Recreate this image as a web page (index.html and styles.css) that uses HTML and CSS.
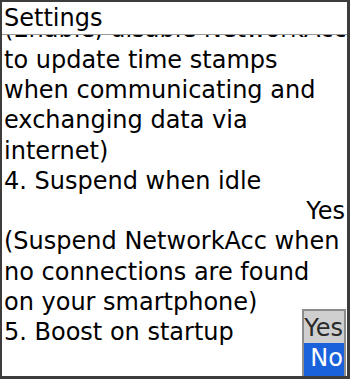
FILE: index.html
```html
<!DOCTYPE html>
<html>
<head>
<meta charset="utf-8">
<link rel="stylesheet" href="styles.css">
</head>
<body>
<div class="frame">
  <div class="titlebar">Settings</div>
  <div class="content">
    <div class="lines">
      <div class="line first">(Enable, disable NetworkAcc</div>
      <div class="line">to update time stamps</div>
      <div class="line">when communicating and</div>
      <div class="line">exchanging data via</div>
      <div class="line">internet)</div>
      <div class="line">4. Suspend when idle</div>
      <div class="line value">Yes</div>
      <div class="line">(Suspend NetworkAcc when</div>
      <div class="line">no connections are found</div>
      <div class="line">on your smartphone)</div>
      <div class="line">5. Boost on startup</div>
    </div>
  </div>
  <div class="popup">
    <div class="opt">Yes</div>
    <div class="opt selected">No</div>
  </div>
</div>
</body>
</html>
```
FILE: styles.css
```css
html, body {
  margin: 0;
  padding: 0;
  background: #ffffff;
}
body {
  font-family: "DejaVu Sans", sans-serif;
  font-size: 24px;
  color: #000;
}
.frame {
  position: relative;
  width: 350px;
  height: 379px;
  box-sizing: border-box;
  border-style: solid;
  border-color: #3c3c3c;
  border-width: 2px 3px 3px 2px;
  background: #fff;
  display: flex;
  flex-direction: column;
  overflow: hidden;
}
.titlebar {
  height: 32px;
  line-height: 32px;
  padding-left: 2px;
  border-bottom: 1px solid #9a9a9a;
  flex: none;
  white-space: nowrap;
}
.content {
  flex: 1;
  overflow: hidden;
  padding: 0 2px;
}
.lines {
  margin-top: -20.8px;
}
.line {
  line-height: 30.3px;
  white-space: nowrap;
}
.line.first {
  height: 30.5px;
  line-height: 30px;
}
.value {
  text-align: right;
}
.popup {
  position: absolute;
  right: 1px;
  bottom: 0;
  width: 44px;
  box-sizing: border-box;
  border: 2px solid #8c8c8c;
  border-bottom: 0;
  background: #cfcfcf;
}
.opt {
  height: 32px;
  line-height: 35px;
  text-align: right;
  padding-right: 1px;
  color: #2a2a2a;
  overflow: hidden;
}
.opt.selected {
  background: #1a62dc;
  color: #fff;
  height: 33px;
  line-height: 31px;
}
```
